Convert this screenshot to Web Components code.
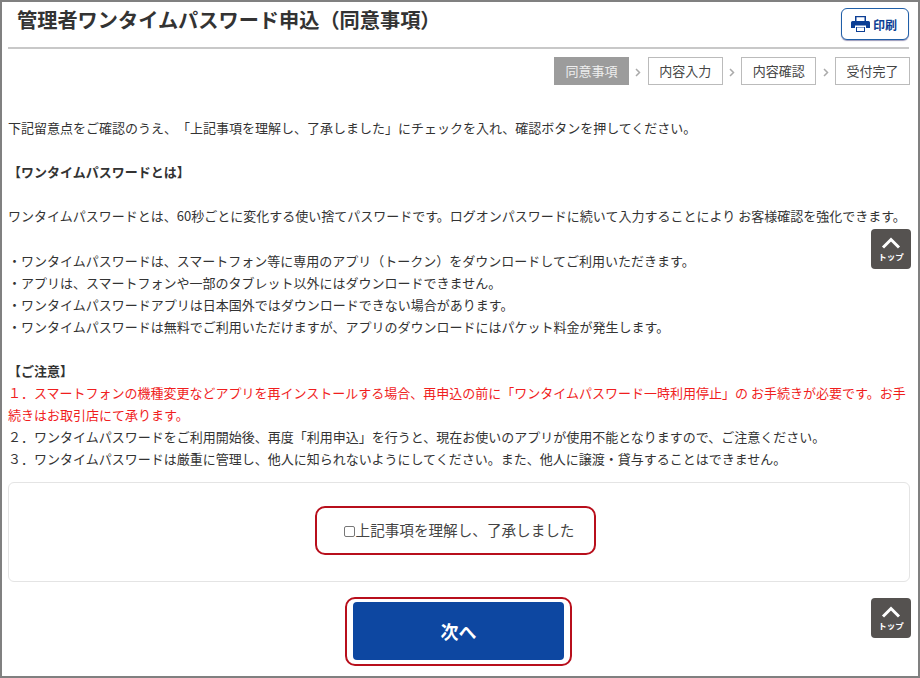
<!DOCTYPE html>
<html lang="ja"><head><meta charset="utf-8"><style>
html,body{margin:0;padding:0;background:#fff}
body{font-family:"Noto Sans CJK JP","Noto Sans",sans-serif;color:#333}
</style></head><body>
<consent-page></consent-page>
<script>
function def(name,html){customElements.define(name,class extends HTMLElement{constructor(){super();this.attachShadow({mode:'open'}).innerHTML=html}})}
const CJK='"Noto Sans CJK JP","Noto Sans",sans-serif';
def('print-button',`<style>:host{display:flex;align-items:center;justify-content:center;gap:3px;width:68px;height:32px;box-sizing:border-box;padding-right:2px;border:1px solid #1f5fa8;border-radius:6px;background:#fff;box-shadow:0 1px 1px #99b;color:#0d3f94;font:bold 12px ${CJK}}svg{display:block}</style>
<svg width="19" height="16" viewBox="0 0 19 16"><path fill="#0d3f94" d="M4 0h11v5H4zM1.5 5h16A1.5 1.5 0 0 1 19 6.500V12h-4V9.500H4V12H0V6.500A1.500 1.500 0 0 1 1.500 5zM5 11h9v5H5z"/><path fill="#fff" d="M5.500 1.300h8V5h-8zM6 11.500h7V15H6z"/></svg><slot></slot>`);
def('step-item',`<style>:host{display:flex;align-items:center;justify-content:center;width:75px;height:28px;box-sizing:border-box;padding-bottom:2px;border:1px solid #bbb;background:#fff;color:#444;font:13px/1 ${CJK}}:host([active]){background:#9c9c9c;border-color:#9c9c9c;color:#eee}</style><slot></slot>`);
def('step-sep',`<style>:host{display:flex;align-items:center;justify-content:center;width:18.670px;height:28px}svg{display:block;margin-top:3px}</style><svg width="6" height="9" viewBox="0 0 6 9"><path d="M1 1l3.500 3.500L1 8" fill="none" stroke="#aaa" stroke-width="1.500"/></svg>`);
def('step-bar',`<style>:host{display:flex;justify-content:flex-end;margin-top:8px;padding-right:8px}</style><slot></slot>`);
def('top-link',`<style>:host{position:absolute;right:7px;display:flex;flex-direction:column;align-items:center;width:40px;height:40px;box-sizing:border-box;padding-top:8px;background:#555250;border-radius:4px;color:#fff;font:bold 8.500px/1 ${CJK}}svg{display:block;margin-bottom:3px}</style><svg width="20" height="12" viewBox="0 0 20 12"><path d="M2 10.500l8-8 8 8" fill="none" stroke="#fff" stroke-width="3"/></svg><span>トップ</span>`);
def('page-head',`<style>:host{display:flex;justify-content:space-between;align-items:flex-start;height:45px;margin:0 9px 0 6px;border-bottom:2px solid #c8c8c8;box-sizing:content-box}h1{margin:4px 0 0 9px;font:bold 20.200px/28px ${CJK};color:#333;text-spacing-trim:space-all}.p{margin-top:6px}</style><h1><slot name="title"></slot></h1><div class="p"><slot name="action"></slot></div>`);
def('note-text',`<style>:host{display:block;margin:32px 8px 0 6px;font:13px/22.100px ${CJK};color:#333;text-spacing-trim:space-all}</style><slot></slot>`);
def('agree-card',`<style>:host{display:flex;align-items:center;justify-content:center;height:100px;box-sizing:border-box;margin:11px 8px 0 6px;padding:0 7px 2px 0;border:1px solid #e4e4e4;border-radius:6px}.o{display:flex;align-items:center;justify-content:center;width:281px;height:49px;box-sizing:border-box;padding-left:7px;border:2px solid #b80f1c;border-radius:10px;font:14.600px/1 ${CJK};color:#444}i{display:inline-block;width:11px;height:11px;box-sizing:border-box;border:1.500px solid #777;border-radius:2px;margin:2px 1px 0 0}</style><div class="o"><i></i><slot></slot></div>`);
def('next-button',`<style>:host{display:block;width:227px;height:69px;box-sizing:border-box;margin:15px 0 0 343px;border:2px solid #b80f1c;border-radius:10px;padding:3px 6px 4px}.b{display:flex;align-items:center;justify-content:center;height:100%;background:#0d47a1;border-radius:4px;color:#fff;font:bold 18px/1 ${CJK}}</style><div class="b"><slot></slot></div>`);
def('consent-page',`<style>:host{display:block;position:relative;width:920px;height:678px;box-sizing:border-box;border:2px solid #808080;overflow:hidden;background:#fff}.r{color:#f01e1e}b{font-weight:bold}.t1{top:227px}.t2{top:596px}</style>
<page-head><span slot="title">管理者ワンタイムパスワード申込（同意事項）</span><print-button slot="action">印刷</print-button></page-head>
<step-bar><step-item active>同意事項</step-item><step-sep></step-sep><step-item>内容入力</step-item><step-sep></step-sep><step-item>内容確認</step-item><step-sep></step-sep><step-item>受付完了</step-item></step-bar>
<note-text>下記留意点をご確認のうえ、「上記事項を理解し、了承しました」にチェックを入れ、確認ボタンを押してください。<br><br><b>【ワンタイムパスワードとは】</b><br><br>ワンタイムパスワードとは、60秒ごとに変化する使い捨てパスワードです。ログオンパスワードに続いて入力することにより お客様確認を強化できます。<br><br>・ワンタイムパスワードは、スマートフォン等に専用のアプリ（トークン）をダウンロードしてご利用いただきます。<br>・アプリは、スマートフォンや一部のタブレット以外にはダウンロードできません。<br>・ワンタイムパスワードアプリは日本国外ではダウンロードできない場合があります。<br>・ワンタイムパスワードは無料でご利用いただけますが、アプリのダウンロードにはパケット料金が発生します。<br><br><b>【ご注意】</b><br><span class="r">１．スマートフォンの機種変更などアプリを再インストールする場合、再申込の前に「ワンタイムパスワード一時利用停止」の お手続きが必要です。お手続きはお取引店にて承ります。</span><br>２．ワンタイムパスワードをご利用開始後、再度「利用申込」を行うと、現在お使いのアプリが使用不能となりますので、ご注意ください。<br>３．ワンタイムパスワードは厳重に管理し、他人に知られないようにしてください。また、他人に譲渡・貸与することはできません。</note-text>
<agree-card>上記事項を理解し、了承しました</agree-card>
<next-button>次へ</next-button>
<top-link class="t1"></top-link><top-link class="t2"></top-link>`);
</script></body></html>
